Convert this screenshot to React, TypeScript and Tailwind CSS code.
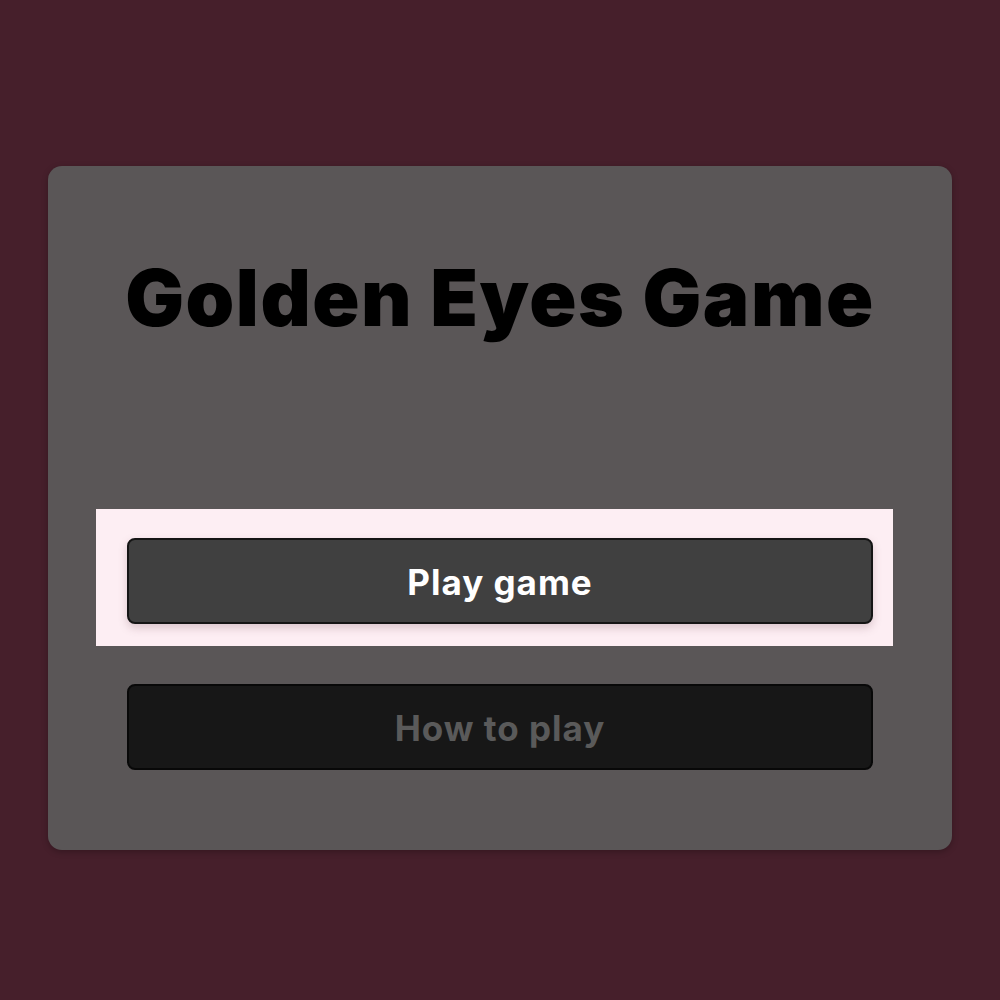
import React from "react";

function App() {
  return (
    <div
      className="w-[1000px] h-[1000px] bg-[#461f2b] pt-[166px] pl-[48px]"
      style={{ fontFamily: '"Inter", "Noto Sans", sans-serif' }}
    >
      <div className="w-[904px] h-[684px] rounded-[14px] bg-[#5a5657] shadow-[0_2px_6px_rgba(0,0,0,0.25)] flex flex-col">
        <div className="h-[343px] pt-[92px]">
          <h1 className="text-center text-[78px] leading-[80px] font-black text-black tracking-[1.5px]">
            Golden Eyes Game
          </h1>
        </div>
        <div className="ml-[48px] w-[797px] h-[137px] bg-[#fdeef3] pl-[31px] pt-[29px]">
          <button className="w-[746px] h-[86px] rounded-[8px] bg-[#404040] border-2 border-[#151515] shadow-[0_4px_8px_rgba(120,80,90,0.25)] text-white text-[35px] font-bold tracking-[1px] pt-[2px]">
            Play game
          </button>
        </div>
        <div className="ml-[79px] mt-[38px]">
          <button className="w-[746px] h-[86px] rounded-[8px] bg-[#171717] border-2 border-[#080808] text-[#5a5a5a] text-[35px] font-bold tracking-[1px] pt-[2px]">
            How to play
          </button>
        </div>
      </div>
    </div>
  );
}

export default App;
